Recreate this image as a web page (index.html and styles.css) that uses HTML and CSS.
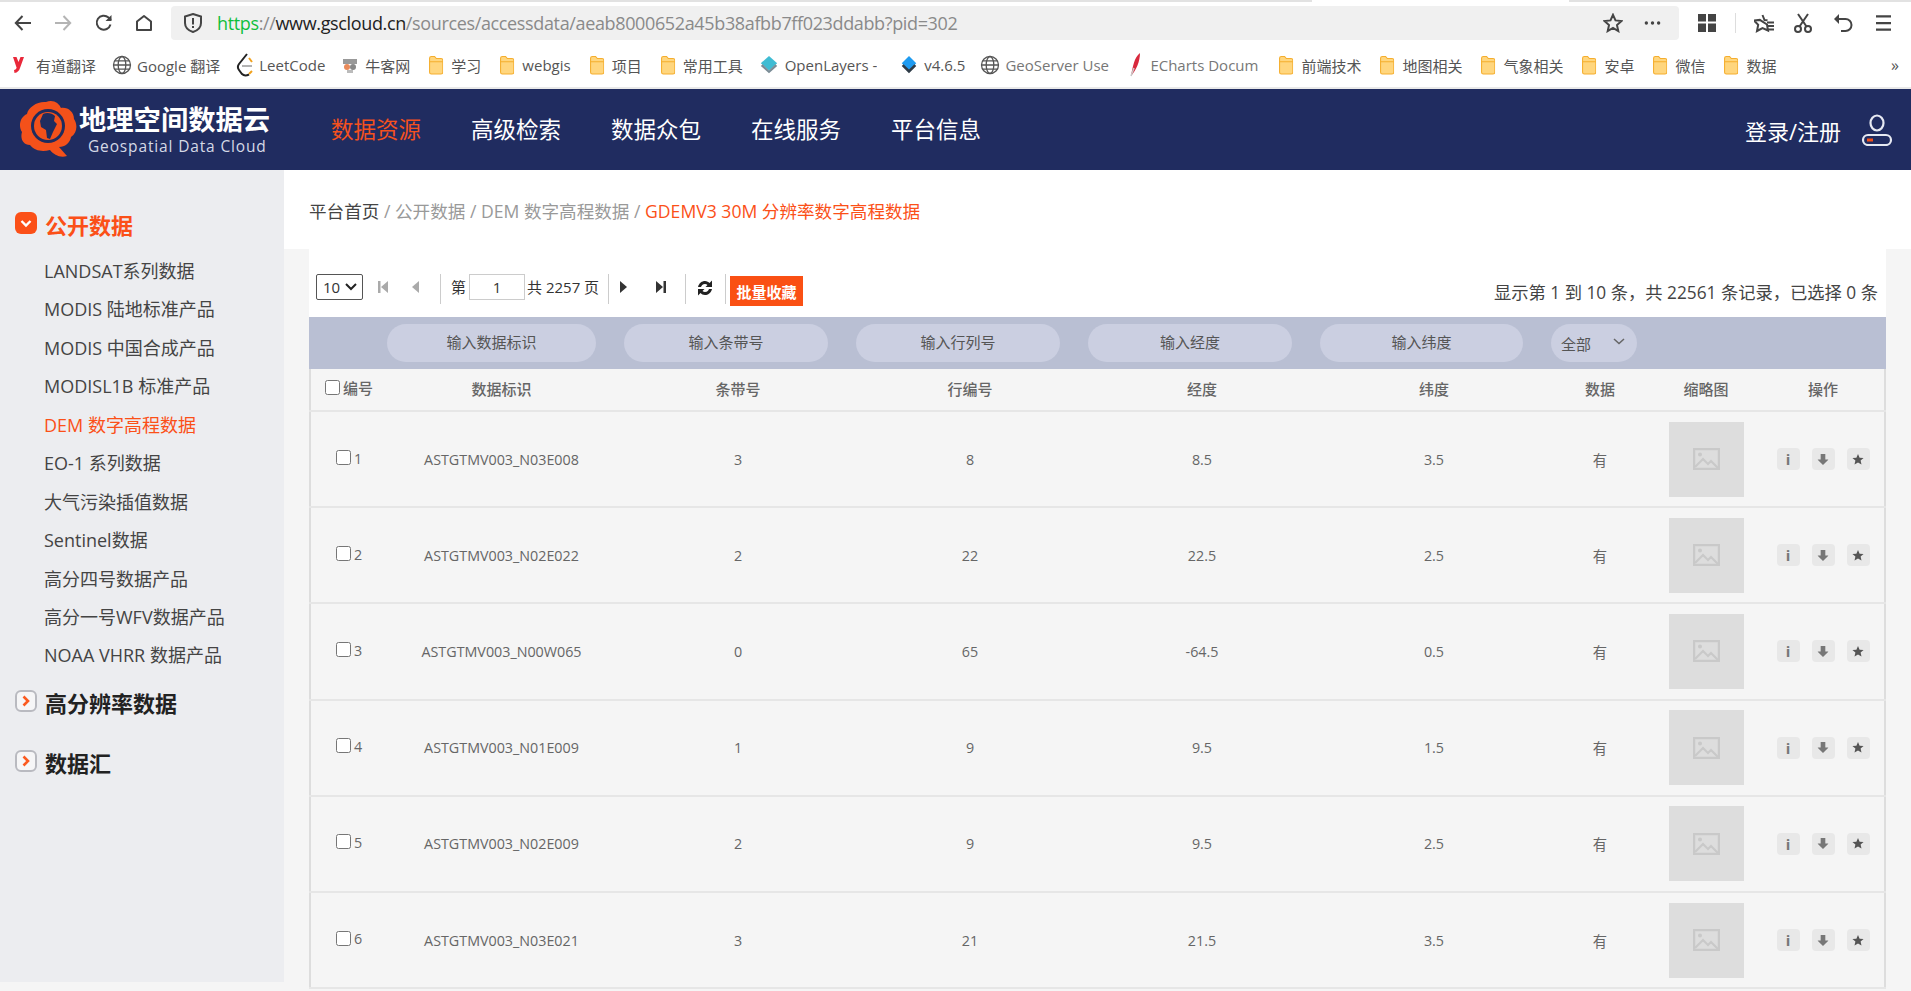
FILE: index.html
```html
<!DOCTYPE html>
<html lang="zh-CN">
<head>
<meta charset="utf-8">
<title>地理空间数据云</title>
<link rel="stylesheet" href="styles.css">
</head>
<body>
<svg class="sprite" aria-hidden="true">
  <symbol id="folder" viewBox="0 0 20 28"><path d="M1 4.5C1 3 2 2 3.500 2H8l2.500 3h6.500C18.500 5 19.500 6 19.500 7.500V24c0 1.500-1 2.500-2.500 2.500H3.500C2 26.500 1 25.500 1 24Z" fill="#ffd67e" stroke="#f5ae2e" stroke-width="1.500"/><path d="M1 9.500h18.500" stroke="#f5ae2e" stroke-width="1.500"/></symbol>
  <symbol id="globe" viewBox="0 0 20 20"><g fill="none" stroke="#555" stroke-width="1.300"><circle cx="10" cy="10" r="8.500"/><ellipse cx="10" cy="10" rx="3.800" ry="8.500"/><path d="M1.500 10h17M2.800 5.800h14.400M2.800 14.200h14.400"/></g></symbol>
  <symbol id="pic" viewBox="0 0 27 22"><g fill="none" stroke="#c9c9c9" stroke-width="2.200"><rect x="1.100" y="1.100" width="24.800" height="19.800"/><path d="M2 19l8-8 5 5 3-3 7 7"/></g><circle cx="7" cy="6.500" r="2" fill="#c9c9c9"/></symbol>
  <symbol id="down" viewBox="0 0 12 14"><path d="M3.500 1h5v6H12L6 13 0 7h3.500Z" fill="#777"/></symbol>
  <symbol id="star" viewBox="0 0 12 12"><path d="M6 .5l1.600 3.700 4 .3-3 2.600.9 3.900L6 9l-3.500 2 .9-3.900-3-2.600 4-.3Z" fill="#555"/></symbol>
  <symbol id="closed" viewBox="0 0 22 22"><rect x="1" y="1" width="20" height="20" rx="5" fill="#f6f6f7" stroke="#b9bac0" stroke-width="2"/><path d="M8.500 6.500l4.500 4.500-4.500 4.500" fill="none" stroke="#fb5a20" stroke-width="2.600"/></symbol>
</svg>

<div class="tabstrip"><span class="strip-a"></span><span class="strip-b"></span><span class="strip-c"></span></div>
<div class="toolbar">
  <svg class="tb back" viewBox="0 0 18 18"><path d="M17 9H2M8.500 2L1.800 9l6.700 7" fill="none" stroke="#444" stroke-width="2"/></svg>
  <svg class="tb forward" viewBox="0 0 18 18"><path d="M1 9h15M9.500 2l6.700 7-6.700 7" fill="none" stroke="#b4b4b4" stroke-width="2"/></svg>
  <svg class="tb reload" viewBox="0 0 18 18"><path d="M15.500 10.500A7 7 0 1 1 13.500 3.500L16 6" fill="none" stroke="#444" stroke-width="2"/><path d="M16.500 1v6h-6Z" fill="#444"/></svg>
  <svg class="tb home" viewBox="0 0 18 18"><path d="M2 16V7.500L9 2l7 5.500V16Z" fill="none" stroke="#444" stroke-width="2" stroke-linejoin="round"/></svg>
  <div class="urlbar">
    <svg class="shield" viewBox="0 0 18 20"><path d="M9 1l8 2.500V10c0 4.500-3.500 7.500-8 9-4.500-1.500-8-4.500-8-9V3.500Z" fill="none" stroke="#444" stroke-width="2"/><path d="M8 5h2v6.500H8ZM8 13h2v2H8Z" fill="#444"/></svg>
    <span class="url"><span class="u-green">https</span><span class="u-gray">://</span><span class="u-dark">www.gscloud.cn</span><span class="u-gray">/sources/accessdata/aeab8000652a45b38afbb7ff023ddabb?pid=302</span></span>
    <svg class="url-star" viewBox="0 0 20 20"><path d="M10 1.800l2.500 5.600 6 .6-4.500 4.100 1.300 6L10 15l-5.300 3.100 1.300-6L1.500 8l6-.6Z" fill="none" stroke="#444" stroke-width="2"/></svg>
    <svg class="url-more" viewBox="0 0 18 4"><circle cx="2.500" cy="2" r="1.800" fill="#444"/><circle cx="9" cy="2" r="1.800" fill="#444"/><circle cx="15.500" cy="2" r="1.800" fill="#444"/></svg>
  </div>
  <svg class="tb grid-ico" viewBox="0 0 18 18"><path d="M0 0h8v7.500H0ZM10 0h8v7.500h-8ZM0 9.500h8V18H0ZM10 9.500h8V18h-8Z" fill="#444"/></svg>
  <span class="tb-sep"></span>
  <svg class="tb favs" viewBox="0 0 20 20"><path d="M8.500 2l2 5 3 .3M13 11.500l1 6L8.500 15l-5.500 3 1.200-6.200L0 7.500l5.800-.6Z" fill="none" stroke="#444" stroke-width="2"/><path d="M13 9.500h7M13 13h7M13 16.500h7" stroke="#444" stroke-width="1.800"/></svg>
  <svg class="tb scissors" viewBox="0 0 18 20"><g fill="none" stroke="#444" stroke-width="2"><circle cx="4" cy="16" r="3"/><circle cx="14" cy="16" r="3"/><path d="M5.500 13.500L14 1M12.500 13.500L4 1"/></g></svg>
  <svg class="tb undo" viewBox="0 0 20 20"><path d="M5 6h7.500a6 6 0 0 1 0 12H8" fill="none" stroke="#444" stroke-width="2"/><path d="M6 1L1 6l5 5Z" fill="#444"/></svg>
  <svg class="tb menu" viewBox="0 0 16 18"><path d="M0 2h16M0 9h16M0 16h16" stroke="#444" stroke-width="2.400"/></svg>
</div>

<div class="bookmarks">
  <a class="bm"><svg class="bm-yd" viewBox="0 0 11 16"><path d="M0 0h3.500l2 5 2-5H11L7 11c-.8 2.800-2.500 4.500-5.500 5L1 13c1.500-.3 2.300-1 2.600-2.200Z" fill="#e9283a"/></svg><span>有道翻译</span></a>
  <a class="bm"><svg class="bm-ico" viewBox="0 0 20 20"><use href="#globe"/></svg><span>Google 翻译</span></a>
  <a class="bm"><svg class="bm-lc" viewBox="0 0 18 24"><path d="M11 1L3 11c-1.500 2-1.500 4 0 6l3 4c1.500 1.500 4 2 7 .5" fill="none" stroke="#222" stroke-width="2"/><path d="M6 13h10" stroke="#b3b3b3" stroke-width="2"/><path d="M13 5l3 4M13 21l3-3" stroke="#f0a11e" stroke-width="2"/></svg><span>LeetCode</span></a>
  <a class="bm"><svg class="bm-nk" viewBox="0 0 18 18"><rect x="2" y="3" width="14" height="5" fill="#999"/><circle cx="6" cy="11" r="3" fill="#e98a5a"/><circle cx="12" cy="11" r="3" fill="#888"/><path d="M6 14h6v3H6Z" fill="#bbb"/></svg><span>牛客网</span></a>
  <a class="bm"><svg class="bm-ico" viewBox="0 0 20 28"><use href="#folder"/></svg><span>学习</span></a>
  <a class="bm"><svg class="bm-ico" viewBox="0 0 20 28"><use href="#folder"/></svg><span>webgis</span></a>
  <a class="bm"><svg class="bm-ico" viewBox="0 0 20 28"><use href="#folder"/></svg><span>项目</span></a>
  <a class="bm"><svg class="bm-ico" viewBox="0 0 20 28"><use href="#folder"/></svg><span>常用工具</span></a>
  <a class="bm bm-ol"><svg class="bm-ico" viewBox="0 0 20 22"><path d="M10 1l9 8-9 8-9-8Z" fill="#3fbcd3"/><path d="M1 12l9 8 9-8-2-1.800L10 17l-7-6.800Z" fill="#7a8c96"/></svg><span class="fade">OpenLayers -</span></a>
  <a class="bm bm-v"><svg class="bm-ico" viewBox="0 0 20 22"><path d="M10 1l8 8-8 8-8-8Z" fill="#1f9bf0"/><path d="M2 12l8 8 8-8-2-1.800L10 16l-6-5.800Z" fill="#2e3b47"/></svg><span>v4.6.5</span></a>
  <a class="bm"><svg class="bm-ico" viewBox="0 0 20 20"><use href="#globe"/></svg><span class="fade gs">GeoServer Use</span></a>
  <a class="bm"><svg class="bm-ec" viewBox="0 0 12 24"><path d="M10 0C4 5 3 13 1 23c5-6 9-14 9-23Z" fill="#d8283c"/><path d="M1 23c1-3 2-5 3-8" stroke="#c9c9c9" stroke-width="1.500"/></svg><span class="fade ec">ECharts Docum</span></a>
  <a class="bm"><svg class="bm-ico" viewBox="0 0 20 28"><use href="#folder"/></svg><span>前端技术</span></a>
  <a class="bm"><svg class="bm-ico" viewBox="0 0 20 28"><use href="#folder"/></svg><span>地图相关</span></a>
  <a class="bm"><svg class="bm-ico" viewBox="0 0 20 28"><use href="#folder"/></svg><span>气象相关</span></a>
  <a class="bm"><svg class="bm-ico" viewBox="0 0 20 28"><use href="#folder"/></svg><span>安卓</span></a>
  <a class="bm"><svg class="bm-ico" viewBox="0 0 20 28"><use href="#folder"/></svg><span>微信</span></a>
  <a class="bm"><svg class="bm-ico" viewBox="0 0 20 28"><use href="#folder"/></svg><span>数据</span></a>
  <span class="bm-more">»</span>
</div>

<header class="site-head">
  <div class="logo">
    <svg class="logo-mark" viewBox="0 0 60 62">
      <path d="M27 3c7-3 13 1 15 6 7-1 13 4 13 11 4 6 3 14-3 18-1 6-6 10-12 10l8 9c-7 2-13-1-17-6-8 2-15 1-20-5C4 46 1 40 3 33-1 27 1 18 8 15c1-7 11-13 19-12Z" fill="#f4511a"/>
      <circle cx="29" cy="27" r="17" fill="#1f2c5e"/>
      <circle cx="29" cy="27" r="14" fill="#f4511a"/>
      <path d="M24 15c4-2 9-1 12 2l-1 5 3 3-4 8-3 7-3-1-1-8-5-3-1-6Z" fill="#1f2c5e"/>
    </svg>
    <div class="logo-text">
      <div class="logo-cn">地理空间数据云</div>
      <div class="logo-en">Geospatial Data Cloud</div>
    </div>
  </div>
  <nav class="main-nav">
    <a class="nav-item active">数据资源</a>
    <a class="nav-item">高级检索</a>
    <a class="nav-item">数据众包</a>
    <a class="nav-item">在线服务</a>
    <a class="nav-item">平台信息</a>
  </nav>
  <div class="user">
    <span>登录/注册</span>
    <svg class="user-ico" viewBox="0 0 32 32"><g fill="none" stroke="#e6e9f2" stroke-width="2.200"><ellipse cx="16" cy="9" rx="6.500" ry="7.500"/><rect x="2" y="21" width="28" height="10" rx="5"/></g><rect x="6" y="24.500" width="6" height="3" fill="#f4511a"/></svg>
  </div>
</header>

<div class="main">
  <aside class="sidebar">
    <h2 class="side-title open"><svg class="side-ico" viewBox="0 0 22 22"><rect width="22" height="22" rx="6" fill="#fb5018"/><path d="M6.500 9l4.500 4.500L15.500 9" fill="none" stroke="#fff" stroke-width="2.400"/></svg>公开数据</h2>
    <ul class="side-list">
      <li>LANDSAT系列数据</li>
      <li>MODIS 陆地标准产品</li>
      <li>MODIS 中国合成产品</li>
      <li>MODISL1B 标准产品</li>
      <li class="current">DEM 数字高程数据</li>
      <li>EO-1 系列数据</li>
      <li>大气污染插值数据</li>
      <li>Sentinel数据</li>
      <li>高分四号数据产品</li>
      <li>高分一号WFV数据产品</li>
      <li>NOAA VHRR 数据产品</li>
    </ul>
    <h2 class="side-title"><svg class="side-ico" viewBox="0 0 22 22"><use href="#closed"/></svg>高分辨率数据</h2>
    <h2 class="side-title"><svg class="side-ico" viewBox="0 0 22 22"><use href="#closed"/></svg>数据汇</h2>
  </aside>

  <section class="content">
    <div class="crumbs"><span class="c-home">平台首页</span> / 公开数据 / DEM 数字高程数据 / <span class="c-now">GDEMV3 30M 分辨率数字高程数据</span></div>
    <div class="panel">
      <div class="pager">
        <div class="select-page">10<svg viewBox="0 0 12 8"><path d="M1 1l5 5 5-5" fill="none" stroke="#222" stroke-width="2"/></svg></div>
        <svg class="pg first" viewBox="0 0 10 12"><path d="M0 0h2.500v12H0ZM10 0v12L3 6Z" fill="#aaa"/></svg>
        <svg class="pg prev" viewBox="0 0 7 12"><path d="M7 0v12L0 6Z" fill="#aaa"/></svg>
        <span class="pg-sep s1"></span>
        <span class="pg-label">第</span>
        <span class="pg-input">1</span>
        <span class="pg-label total">共 2257 页</span>
        <span class="pg-sep s2"></span>
        <svg class="pg next" viewBox="0 0 7 12"><path d="M0 0v12l7-6Z" fill="#333"/></svg>
        <svg class="pg last" viewBox="0 0 10 12"><path d="M0 0v12l7-6ZM7.500 0H10v12H7.500Z" fill="#333"/></svg>
        <span class="pg-sep s3"></span>
        <svg class="pg refresh" viewBox="0 0 16 16"><path d="M1 7C2 3 5 1 8 1c2 0 3.500 1 4.500 2L15 .5V7H8.500l2-2C9.800 4.300 9 4 8 4 5.500 4 4.500 5.500 4 7ZM15 9c-1 4-4 6-7 6-2 0-3.500-1-4.500-2L1 15.500V9h6.500l-2 2c.7.700 1.500 1 2.500 1 2.500 0 3.500-1.500 4-3Z" fill="#222"/></svg>
        <span class="pg-sep s4"></span>
        <button class="batch">批量收藏</button>
        <div class="summary">显示第 1 到 10 条，共 22561 条记录，已选择 0 条</div>
      </div>
      <div class="filters">
        <div class="pill w-a">输入数据标识</div>
        <div class="pill w-b">输入条带号</div>
        <div class="pill w-b">输入行列号</div>
        <div class="pill w-b">输入经度</div>
        <div class="pill w-c">输入纬度</div>
        <div class="pill w-d"><span>全部</span><svg viewBox="0 0 12 7"><path d="M1 1l5 4.500L11 1" fill="none" stroke="#666" stroke-width="1.500"/></svg></div>
      </div>
      <table class="data">
        <thead>
          <tr><th class="c1"><input type="checkbox" class="cb">编号</th><th class="c2">数据标识</th><th class="c3">条带号</th><th class="c4">行编号</th><th class="c5">经度</th><th class="c6">纬度</th><th class="c7">数据</th><th class="c8">缩略图</th><th class="c9">操作</th></tr>
        </thead>
        <tbody>
          <tr><td class="num"><input type="checkbox" class="cb">1</td><td>ASTGTMV003_N03E008</td><td>3</td><td>8</td><td>8.5</td><td>3.5</td><td>有</td><td><div class="thumb"><svg viewBox="0 0 27 22"><use href="#pic"/></svg></div></td><td><div class="acts"><span class="act">i</span><span class="act"><svg viewBox="0 0 12 14"><use href="#down"/></svg></span><span class="act"><svg viewBox="0 0 12 12"><use href="#star"/></svg></span></div></td></tr>
          <tr><td class="num"><input type="checkbox" class="cb">2</td><td>ASTGTMV003_N02E022</td><td>2</td><td>22</td><td>22.5</td><td>2.5</td><td>有</td><td><div class="thumb"><svg viewBox="0 0 27 22"><use href="#pic"/></svg></div></td><td><div class="acts"><span class="act">i</span><span class="act"><svg viewBox="0 0 12 14"><use href="#down"/></svg></span><span class="act"><svg viewBox="0 0 12 12"><use href="#star"/></svg></span></div></td></tr>
          <tr><td class="num"><input type="checkbox" class="cb">3</td><td>ASTGTMV003_N00W065</td><td>0</td><td>65</td><td>-64.5</td><td>0.5</td><td>有</td><td><div class="thumb"><svg viewBox="0 0 27 22"><use href="#pic"/></svg></div></td><td><div class="acts"><span class="act">i</span><span class="act"><svg viewBox="0 0 12 14"><use href="#down"/></svg></span><span class="act"><svg viewBox="0 0 12 12"><use href="#star"/></svg></span></div></td></tr>
          <tr><td class="num"><input type="checkbox" class="cb">4</td><td>ASTGTMV003_N01E009</td><td>1</td><td>9</td><td>9.5</td><td>1.5</td><td>有</td><td><div class="thumb"><svg viewBox="0 0 27 22"><use href="#pic"/></svg></div></td><td><div class="acts"><span class="act">i</span><span class="act"><svg viewBox="0 0 12 14"><use href="#down"/></svg></span><span class="act"><svg viewBox="0 0 12 12"><use href="#star"/></svg></span></div></td></tr>
          <tr><td class="num"><input type="checkbox" class="cb">5</td><td>ASTGTMV003_N02E009</td><td>2</td><td>9</td><td>9.5</td><td>2.5</td><td>有</td><td><div class="thumb"><svg viewBox="0 0 27 22"><use href="#pic"/></svg></div></td><td><div class="acts"><span class="act">i</span><span class="act"><svg viewBox="0 0 12 14"><use href="#down"/></svg></span><span class="act"><svg viewBox="0 0 12 12"><use href="#star"/></svg></span></div></td></tr>
          <tr><td class="num"><input type="checkbox" class="cb">6</td><td>ASTGTMV003_N03E021</td><td>3</td><td>21</td><td>21.5</td><td>3.5</td><td>有</td><td><div class="thumb"><svg viewBox="0 0 27 22"><use href="#pic"/></svg></div></td><td><div class="acts"><span class="act">i</span><span class="act"><svg viewBox="0 0 12 14"><use href="#down"/></svg></span><span class="act"><svg viewBox="0 0 12 12"><use href="#star"/></svg></span></div></td></tr>
        </tbody>
      </table>
    </div>
  </section>
</div>
</body>
</html>
```

FILE: styles.css
```css
* { box-sizing: border-box; }
html, body { height: 100%; }
body {
  margin: 0;
  overflow: hidden;
  background: #f5f5f5;
  font-family: "Open Sans", "Noto Sans CJK SC", sans-serif;
  color: #333;
}
.sprite { display: none; }

/* browser chrome */
.tabstrip { display: flex; height: 2px; background: #fff; }
.strip-a { width: 1312px; background: #e2e2e2; }
.strip-b { width: 257px; }
.strip-c { flex: 1; background: #e2e2e2; }

.toolbar { display: flex; align-items: center; height: 44px; padding-bottom: 2px; background: #fff; }
.tb { flex: none; height: 18px; }
.back { width: 18px; margin-left: 14px; }
.forward { width: 18px; margin-left: 22px; }
.reload { width: 18px; margin-left: 23px; }
.home { width: 18px; margin-left: 22px; }
.urlbar {
  display: flex; align-items: center;
  width: 1508px; height: 34px; margin-left: 18px; padding-left: 13px;
  background: #f0f0f0; border-radius: 4px;
}
.shield { width: 18px; height: 20px; flex: none; }
.url { margin-left: 15px; font-size: 18px; white-space: nowrap; flex: none; width: 1386px; letter-spacing: -.02em; }
.u-green { color: #0fbf3c; }
.u-gray { color: #8a8a8a; }
.u-dark { color: #222; }
.url-star { width: 20px; height: 20px; flex: none; }
.url-more { width: 17px; height: 4px; flex: none; margin-left: 21px; }
.grid-ico { width: 18px; margin-left: 19px; }
.tb-sep { width: 1px; height: 20px; margin-left: 19px; background: #ddd; }
.favs { width: 20px; height: 20px; margin-left: 18px; }
.scissors { width: 18px; height: 20px; margin-left: 20px; }
.undo { width: 20px; height: 20px; margin-left: 21px; }
.menu { width: 15px; margin-left: 23px; }

.bookmarks {
  display: flex; align-items: center; gap: 16px;
  height: 43px; padding: 0 0 3px 13px;
  background: #fff; border-bottom: 2px solid #e9e9e9;
  font-size: 15px; color: #555; white-space: nowrap;
}
.bm { display: flex; align-items: center; gap: 5px; flex: none; }
.bm-ico { width: 20px; height: 20px; flex: none; }
.bm-yd { width: 11px; height: 16px; margin-right: 7px; }
.bm-lc { width: 18px; height: 24px; }
.bm-nk { width: 18px; height: 18px; margin-right: 1px; }
.bm-ec { width: 12px; height: 24px; margin-right: 3px; }
.bm-ol { margin-right: 6px; gap: 6px; }
.bm-v { margin-right: -1px; gap: 5px; }
.fade { display: block; overflow: hidden; }
.gs { width: 109px; color: #777; }
.ec { width: 110px; color: #777; }
.bm-more { margin-left: auto; margin-right: 12px; font-size: 16px; }

/* site header */
.site-head {
  display: flex; align-items: center; height: 81px; padding-left: 19px; padding-right: 18px;
  background: #202c60; color: #fff;
}
.logo { display: flex; align-items: center; width: 312px; flex: none; }
.logo-mark { width: 60px; height: 62px; flex: none; }
.logo-text { margin-left: 0; }
.logo-cn { font-size: 27.300px; font-weight: 700; line-height: 34px; white-space: nowrap; }
.logo-en { margin: -1px 0 0 9px; font-size: 15.500px; line-height: 20px; letter-spacing: .055em; color: #d5d9e6; white-space: nowrap; }
.main-nav { display: flex; gap: 50px; }
.nav-item { font-size: 22.500px; line-height: 30px; white-space: nowrap; }
.nav-item.active { color: #f4511e; }
.user { display: flex; align-items: center; gap: 20px; margin-left: auto; font-size: 22px; }
.user-ico { width: 32px; height: 32px; flex: none; }

/* main */
.main { display: flex; align-items: flex-start; }
.sidebar { width: 284px; height: 812px; flex: none; padding: 40px 0 0 15px; background: #ecedf0; }
.side-title {
  display: flex; align-items: center; gap: 8px;
  height: 30px; margin: 0 0 30px; font-size: 22px; font-weight: 700; color: #222; line-height: 30px;
}
.side-title.open { color: #fb5018; margin-bottom: 12px; }
.side-ico { width: 22px; height: 22px; flex: none; margin-top: -4px; }
.side-list { list-style: none; margin: 0 0 13px; padding: 0 0 0 29px; }
.side-list li { height: 38.450px; line-height: 38px; font-size: 18px; color: #444; white-space: nowrap; }
.side-list li.current { color: #fb5018; }

.content { flex: 1; min-width: 0; }
.crumbs { height: 79px; padding: 26px 0 0 25px; background: #fff; font-size: 17.600px; line-height: 30px; color: #999; white-space: nowrap; }
.c-home { color: #444; }
.c-now { color: #fb5018; }
.panel { margin: 0 25px; }

.pager { display: flex; align-items: center; height: 68px; padding: 27px 8px 11px 7px; background: #fff; font-size: 15px; color: #333; white-space: nowrap; }
.select-page {
  display: flex; align-items: center; justify-content: space-between;
  width: 47px; height: 26px; margin-top: -9px; padding: 0 5px 0 6px;
  border: 1px solid #555; border-radius: 2px; font-size: 15px;
}
.select-page svg { width: 12px; height: 8px; }
.pg { flex: none; margin-top: -9px; height: 12px; }
.first { width: 10px; margin-left: 15px; }
.prev { width: 7px; margin-left: 24px; }
.pg-sep { width: 1px; height: 30px; flex: none; margin-top: -5px; background: #ccc; }
.s1 { margin-left: 21px; }
.pg-label { margin-top: -9px; flex: none; }
.s1 + .pg-label { margin-left: 10px; }
.pg-input { width: 56px; height: 26px; margin: -9px 2px 0 3px; flex: none; border: 1px solid #ccc; text-align: center; line-height: 24px; }
.s2 { margin-left: 9px; }
.next { width: 7px; margin-left: 11px; }
.last { width: 10px; margin-left: 29px; }
.s3 { margin-left: 19px; }
.refresh { width: 16px; height: 16px; margin: -7px 0 0 11px; }
.s4 { margin-left: 12px; }
.batch {
  width: 73px; height: 30px; margin-left: 4px; flex: none; padding: 0;
  border: 0; background: #fa5014; color: #fff; font: 700 15px "Noto Sans CJK SC", sans-serif;
}
.summary { margin-left: auto; font-size: 17.300px; color: #444; }

.filters { display: flex; gap: 28px; height: 52px; padding: 7px 0 0 78px; background: #b9bfd3; }
.pill { height: 38px; border-radius: 19px; background: #cbcfe1; font-size: 15px; line-height: 36px; text-align: center; color: #555; flex: none; }
.w-a { width: 209px; }
.w-b { width: 204px; }
.w-c { width: 203px; }
.w-d { display: flex; align-items: center; justify-content: space-between; width: 86px; padding: 0 12px 0 10px; }
.w-d span { line-height: 38px; margin-top: 2px; }
.w-d svg { width: 12px; height: 7px; margin-top: -3px; }

.data { width: 100%; border-collapse: collapse; table-layout: fixed; border-left: 2px solid #ddd; border-right: 2px solid #ddd; background: #f5f5f5; font-size: 14.300px; color: #666; }
.data th { height: 42px; padding: 0 0 2px; font-size: 15px; font-weight: 500; color: #666; border-bottom: 2px solid #e6e6e6; text-align: center; white-space: nowrap; }
.data td { height: 96.200px; padding: 0; text-align: center; border-bottom: 2px solid #e6e6e6; white-space: nowrap; }
.c1 { width: 71px; }
.c2 { width: 241px; }
.c3, .c4, .c5, .c6 { width: 232px; }
.c7 { width: 100px; }
.c8 { width: 112px; }
.data th.c1 { text-align: left; padding-left: 14px; }
.data td.num { text-align: left; padding-left: 25px; }
.cb { width: 15px; height: 15px; margin: 0 3px 5px 0; vertical-align: middle; }
.thumb { display: flex; align-items: center; justify-content: center; width: 75px; height: 75px; margin: 0 auto; background: #ddd; }
.thumb svg { width: 27px; height: 22px; }
.acts { display: flex; justify-content: center; gap: 12px; }
.act { display: flex; align-items: center; justify-content: center; width: 23px; height: 22px; border-radius: 4px; background: #e8e8e8; font-size: 15px; font-weight: 700; color: #777; }
.act svg { width: 12px; height: 13px; }
```
